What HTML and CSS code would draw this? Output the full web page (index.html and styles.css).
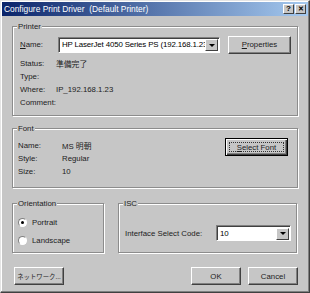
FILE: index.html
```html
<!DOCTYPE html>
<html>
<head>
  <title>Configure Print Driver</title>
  <link rel="stylesheet" href="styles.css">
</head>
<body>
  <div class="window">
    <div class="titlebar">
      <span class="title">Configure Print Driver &nbsp;(Default Printer)</span>
      <div class="title-buttons">
        <span class="tbtn">?</span>
        <span class="tbtn close">&#x2715;</span>
      </div>
    </div>

    <div class="content">
      <div class="group printer">
        <span class="legend">Printer</span>
        <div class="name-row">
          <span class="label"><u>N</u>ame:</span>
          <div class="combo wide">
            <span class="combo-text">HP LaserJet 4050 Series PS (192.168.1.23)</span>
            <span class="combo-arrow"><i class="tri"></i></span>
          </div>
          <button class="btn props"><u>P</u>roperties</button>
        </div>
        <div class="info-row"><span class="label">Status:</span><span class="value jp">準備完了</span></div>
        <div class="info-row"><span class="label">Type:</span><span class="value"></span></div>
        <div class="info-row"><span class="label">Where:</span><span class="value">IP_192.168.1.23</span></div>
        <div class="info-row"><span class="label">Comment:</span><span class="value"></span></div>
      </div>

      <div class="group font">
        <span class="legend">Font</span>
        <div class="font-rows">
          <div class="info-row"><span class="label">Name:</span><span class="value jp">MS 明朝</span></div>
          <div class="info-row"><span class="label">Style:</span><span class="value">Regular</span></div>
          <div class="info-row"><span class="label">Size:</span><span class="value">10</span></div>
        </div>
        <button class="btn default"><span class="focus"><u>S</u>elect Font</span></button>
      </div>

      <div class="bottom-groups">
        <div class="group orientation">
          <span class="legend">Orientation</span>
          <div class="radio-row"><span class="radio checked"></span>Portrait</div>
          <div class="radio-row"><span class="radio"></span>Landscape</div>
        </div>
        <div class="group isc">
          <span class="legend">ISC</span>
          <div class="isc-row">
            <span class="isc-label">Interface Select Code:</span>
            <div class="combo small">
              <span class="combo-text">10</span>
              <span class="combo-arrow"><i class="tri"></i></span>
            </div>
          </div>
        </div>
      </div>

      <div class="button-row">
        <button class="btn jp net">ネットワーク...</button>
        <div class="spacer"></div>
        <button class="btn">OK</button>
        <button class="btn">Cancel</button>
      </div>
    </div>
  </div>
</body>
</html>
```

FILE: styles.css
```css
html, body {
  margin: 0;
  padding: 0;
}

body {
  font-family: "Liberation Sans", Arial, sans-serif;
  font-size: 7.8px;
  color: #1c1c1c;
  background: #c6c6c6;
}

.jp {
  font-family: "Liberation Sans", "Noto Sans CJK JP", sans-serif;
}

.window {
  width: 310px;
  height: 293px;
  box-sizing: border-box;
  background: #c6c6c6;
  border: 1px solid;
  border-color: #e4e4e4 #404040 #404040 #e4e4e4;
  box-shadow: inset -1px -1px 0 #808080, inset 1px 1px 0 #fff;
  padding: 1px;
  display: flex;
  flex-direction: column;
}

.titlebar {
  height: 14px;
  display: flex;
  align-items: center;
  justify-content: space-between;
  padding: 0 2px 0 2px;
  background: linear-gradient(to right, #0a246a, #a6caf0);
  color: #fff;
}

.title {
  font-size: 8.4px;
  white-space: pre;
}

.title-buttons {
  display: flex;
  gap: 1px;
}

.tbtn {
  width: 11px;
  height: 10px;
  box-sizing: border-box;
  background: #c6c6c6;
  color: #000;
  font-weight: bold;
  font-size: 8px;
  line-height: 8px;
  text-align: center;
  border: 1px solid;
  border-color: #fff #404040 #404040 #fff;
}

.tbtn.close {
  font-size: 7px;
}

.content {
  flex: 1;
  padding: 10px 10px 0 10px;
  display: flex;
  flex-direction: column;
}

.group {
  position: relative;
  box-sizing: border-box;
  border: 1px solid #8c8c8c;
  box-shadow: inset 1px 1px 0 #fff, 1px 1px 0 #fff;
}

.legend {
  position: absolute;
  top: -6px;
  left: 4px;
  padding: 0 1px;
  background: #c6c6c6;
  line-height: 11px;
}

.printer {
  height: 90px;
  padding: 9px 0 0 7px;
}

.name-row {
  display: flex;
  align-items: center;
  height: 17px;
  margin-bottom: 4px;
}

.label {
  width: 38px;
  flex: none;
}

.info-row {
  display: flex;
  align-items: center;
  height: 13px;
}

.printer .value {
  margin-left: -2px;
}

.combo {
  position: relative;
  box-sizing: border-box;
  height: 16px;
  background: #fff;
  border: 1px solid;
  border-color: #808080 #fff #fff #808080;
  box-shadow: inset 1px 1px 0 #404040;
  display: flex;
  align-items: center;
  overflow: hidden;
}

.combo.wide {
  width: 162px;
}

.combo.small {
  width: 75px;
}

.combo-text {
  flex: 1;
  padding-left: 3px;
  white-space: nowrap;
  overflow: hidden;
  color: #000;
  font-size: 7.9px;
  letter-spacing: -0.15px;
}

.combo-arrow {
  flex: none;
  width: 13px;
  height: 12px;
  margin: 1px 1px 0 0;
  box-sizing: border-box;
  background: #c6c6c6;
  border: 1px solid;
  border-color: #fff #404040 #404040 #fff;
  display: flex;
  align-items: center;
  justify-content: center;
}

.tri {
  width: 0;
  height: 0;
  border-left: 3px solid transparent;
  border-right: 3px solid transparent;
  border-top: 3px solid #000;
}

.btn {
  box-sizing: border-box;
  width: 50px;
  height: 18px;
  padding: 0;
  font-family: inherit;
  font-size: 7.8px;
  color: #1c1c1c;
  background: #c6c6c6;
  white-space: nowrap;
  border: 1px solid;
  border-color: #fff #404040 #404040 #fff;
  box-shadow: inset -1px -1px 0 #808080;
}

.btn.net {
  font-family: "Liberation Sans", "Noto Sans CJK JP", sans-serif;
  font-size: 6.4px;
}

.btn.props {
  width: 63px;
  margin-left: 8px;
}

.font {
  height: 60px;
  margin-top: 12px;
  padding: 10px 0 0 5px;
  display: flex;
  justify-content: space-between;
}

.font .label {
  width: 44px;
}

.btn.default {
  width: 63px;
  height: 18px;
  margin: -1px 9px 0 0;
  border: 1px solid #000;
  box-shadow: inset 1px 1px 0 #fff, inset -1px -1px 0 #404040, inset -2px -2px 0 #808080;
  padding: 3px;
}

.focus {
  display: block;
  height: 100%;
  box-sizing: border-box;
  border: 1px dotted #333;
  line-height: 9px;
}

.bottom-groups {
  display: flex;
  margin-top: 15px;
  gap: 14px;
}

.orientation {
  width: 92px;
  height: 50px;
  padding: 9px 0 0 5px;
}

.radio-row {
  display: flex;
  align-items: center;
  height: 18px;
}

.radio {
  width: 9px;
  height: 9px;
  box-sizing: border-box;
  border-radius: 50%;
  background: #fff;
  border: 1px solid;
  border-color: #808080 #fff #fff #808080;
  margin-right: 5px;
  position: relative;
}

.radio.checked::after {
  content: "";
  position: absolute;
  left: 2px;
  top: 2px;
  width: 3px;
  height: 3px;
  border-radius: 50%;
  background: #000;
}

.isc {
  flex: 1;
  height: 50px;
  margin-right: 1px;
  padding: 21px 0 0 6px;
}

.isc-row {
  display: flex;
  align-items: center;
}

.isc-label {
  width: 91px;
}

.button-row {
  display: flex;
  margin-top: 14px;
  padding-left: 2px;
  gap: 7px;
}

.spacer {
  flex: 1;
}
```
